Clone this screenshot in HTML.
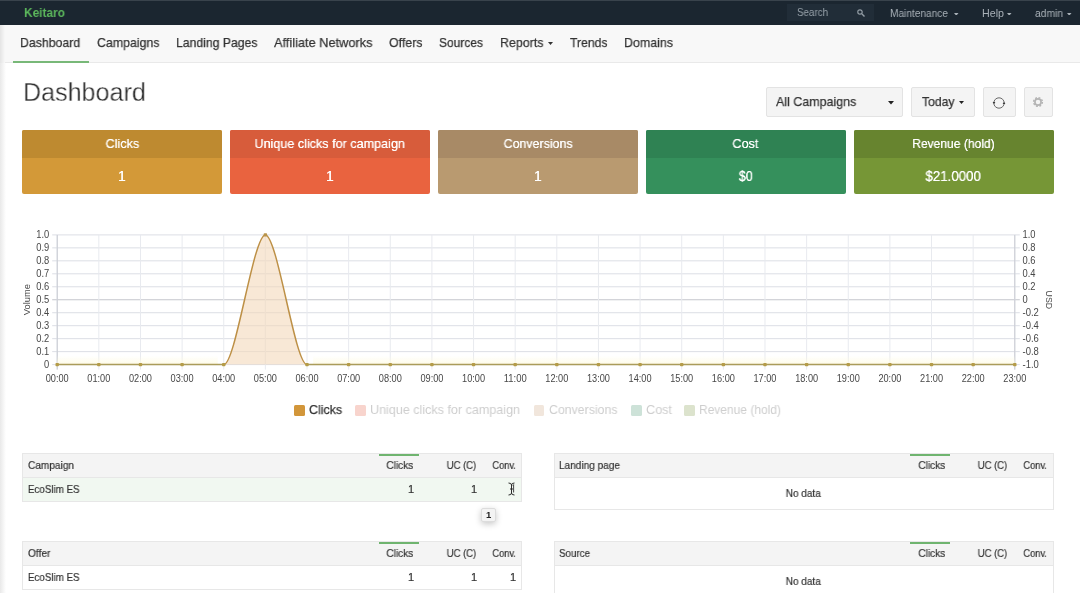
<!DOCTYPE html>
<html><head><meta charset="utf-8"><title>Keitaro</title>
<style>
*{box-sizing:border-box;margin:0;padding:0}
html,body{width:1080px;height:593px;overflow:hidden;background:#fff;font-family:"Liberation Sans",sans-serif;color:#333}
.abs{position:absolute}
.t{position:absolute;display:block;height:20px;line-height:20px;white-space:nowrap;will-change:transform}
#top{position:absolute;left:0;top:0;width:1080px;height:25px;background:#1b2630;border-top:1px solid #39434c}
#search{position:absolute;left:787px;top:4px;width:87px;height:17px;background:#212d38}
#nav{position:absolute;left:0;top:25px;width:1080px;height:38px;background:#f8f8f8;border-bottom:1px solid #e9e9e9}
#ul{position:absolute;left:13px;top:60.5px;width:76px;height:2px;background:#78b878}
.btn{position:absolute;top:87px;height:30px;background:#f4f4f4;border:1px solid #e3e3e3;border-radius:2px}
.card{position:absolute;top:130.3px;width:200px;height:63.8px;border-radius:2px;overflow:hidden}
.ct{height:27.4px}
.tbl{position:absolute;border:1px solid #e7e7e7;background:#fff;overflow:hidden}
.th{position:absolute;left:0;top:0;right:0;height:24px;background:#f4f4f4;border-bottom:1px solid #e7e7e7}
.act{position:absolute;top:-0.8px;width:40px;height:2.4px;background:#6fb46f}
.hl{position:absolute;left:0;right:0;top:24px;height:24px;background:#f1f8f1}
#tip{position:absolute;left:481.3px;top:507.5px;width:15.2px;height:14px;background:#f3f3f3;border:1px solid #dcdcdc;border-radius:2px;box-shadow:0 2px 6px rgba(0,0,0,.22)}
#edge{position:absolute;left:0;top:63px;width:6px;height:530px;background:linear-gradient(to right,#e9e9e9,#fff)}
#edge2{position:absolute;left:0;top:25px;width:5px;height:38px;background:linear-gradient(to right,#e4e4e4,#f8f8f8)}
</style></head><body>
<div id="top"></div>
<span class="t" style="left:24px;transform-origin:0 50%;top:2.5999999999999996px;font-size:13px;color:#5cb85c;transform:scaleX(0.9154);font-weight:bold;">Keitaro</span>
<div id="search"></div>
<span class="t" style="left:797px;transform-origin:0 50%;top:2.1999999999999993px;font-size:10.5px;color:#98a2aa;transform:scaleX(0.9318);">Search</span>
<svg class="abs" style="left:857px;top:9px" width="8" height="8" viewBox="0 0 8 8"><circle cx="3" cy="3" r="2.2" fill="none" stroke="#939da5" stroke-width="1.2"/><line x1="4.8" y1="4.8" x2="7.5" y2="7.5" stroke="#939da5" stroke-width="1.4"/></svg>
<span class="t" style="left:890.4px;transform-origin:0 50%;top:3.1999999999999993px;font-size:10.5px;color:#a9b1b8;transform:scaleX(0.9647);">Maintenance</span><svg class="abs" style="left:954px;top:12.5px" width="4.5" height="2.75" viewBox="0 0 4.5 2.75"><path d="M0 0 H4.5 L2.25 2.75 Z" fill="#a9b1b8"/></svg>
<span class="t" style="left:981.6px;transform-origin:0 50%;top:3.1999999999999993px;font-size:10.5px;color:#a9b1b8;transform:scaleX(1.0188);">Help</span><svg class="abs" style="left:1007.2px;top:12.5px" width="4.5" height="2.75" viewBox="0 0 4.5 2.75"><path d="M0 0 H4.5 L2.25 2.75 Z" fill="#a9b1b8"/></svg>
<span class="t" style="left:1035px;transform-origin:0 50%;top:3.1999999999999993px;font-size:10.5px;color:#a9b1b8;transform:scaleX(0.9791);">admin</span><svg class="abs" style="left:1067px;top:12.5px" width="4.5" height="2.75" viewBox="0 0 4.5 2.75"><path d="M0 0 H4.5 L2.25 2.75 Z" fill="#a9b1b8"/></svg>
<div id="nav"></div><div id="edge2"></div>
<span class="t" style="left:20.2px;transform-origin:0 50%;top:33.0px;font-size:13.5px;color:#333;transform:scaleX(0.9115);-webkit-text-stroke:0.25px #333;">Dashboard</span><span class="t" style="left:97px;transform-origin:0 50%;top:33.0px;font-size:13.5px;color:#333;transform:scaleX(0.9153);-webkit-text-stroke:0.25px #333;">Campaigns</span><span class="t" style="left:176px;transform-origin:0 50%;top:33.0px;font-size:13.5px;color:#333;transform:scaleX(0.9048);-webkit-text-stroke:0.25px #333;">Landing Pages</span><span class="t" style="left:274px;transform-origin:0 50%;top:33.0px;font-size:13.5px;color:#333;transform:scaleX(0.9468);-webkit-text-stroke:0.25px #333;">Affiliate Networks</span><span class="t" style="left:389px;transform-origin:0 50%;top:33.0px;font-size:13.5px;color:#333;transform:scaleX(0.9175);-webkit-text-stroke:0.25px #333;">Offers</span><span class="t" style="left:439px;transform-origin:0 50%;top:33.0px;font-size:13.5px;color:#333;transform:scaleX(0.8884);-webkit-text-stroke:0.25px #333;">Sources</span><span class="t" style="left:500px;transform-origin:0 50%;top:33.0px;font-size:13.5px;color:#333;transform:scaleX(0.9202);-webkit-text-stroke:0.25px #333;">Reports</span><span class="t" style="left:569.5px;transform-origin:0 50%;top:33.0px;font-size:13.5px;color:#333;transform:scaleX(0.9033);-webkit-text-stroke:0.25px #333;">Trends</span><span class="t" style="left:623.5px;transform-origin:0 50%;top:33.0px;font-size:13.5px;color:#333;transform:scaleX(0.9199);-webkit-text-stroke:0.25px #333;">Domains</span><svg class="abs" style="left:547.5px;top:42px" width="5" height="3.0" viewBox="0 0 5 3.0"><path d="M0 0 H5 L2.5 3.0 Z" fill="#333"/></svg>
<div id="ul"></div>
<div id="edge"></div>
<span class="t" style="left:22.9px;transform-origin:0 50%;top:82.4px;font-size:26.4px;color:#2f2f2f;transform:scaleX(0.9508);-webkit-text-stroke:0.3px #fff;">Dashboard</span>
<div class="btn" style="left:766px;width:137px"></div><span class="t" style="left:776px;transform-origin:0 50%;top:92.0px;font-size:13.5px;color:#333;transform:scaleX(0.9226);-webkit-text-stroke:0.25px #333;">All Campaigns</span><svg class="abs" style="left:888px;top:101px" width="6" height="3.5" viewBox="0 0 6 3.5"><path d="M0 0 H6 L3.0 3.5 Z" fill="#222"/></svg>
<div class="btn" style="left:911px;width:64px"></div><span class="t" style="left:921.5px;transform-origin:0 50%;top:92.0px;font-size:13.5px;color:#333;transform:scaleX(0.9022);-webkit-text-stroke:0.25px #333;">Today</span><svg class="abs" style="left:959px;top:101px" width="5" height="3.0" viewBox="0 0 5 3.0"><path d="M0 0 H5 L2.5 3.0 Z" fill="#222"/></svg>
<div class="btn" style="left:983px;width:33px"></div>
<svg class="abs" style="left:992px;top:96px" width="14" height="14" viewBox="0 0 14 14"><circle cx="7" cy="7" r="5.2" fill="none" stroke="#6a6a6a" stroke-width="1"/><path d="M0.6 5.9 L3.4 5.9 L2 8 Z" fill="#333"/><path d="M13.4 8.1 L10.6 8.1 L12 6 Z" fill="#333"/></svg>
<div class="btn" style="left:1024px;width:29px"></div>
<svg class="abs" style="left:1032px;top:96.3px" width="12" height="12" viewBox="0 0 12 12"><circle cx="6" cy="6" r="4.4" fill="none" stroke="#b4b4b4" stroke-width="1.4" stroke-dasharray="1.9 1.55"/><circle cx="6" cy="6" r="3.1" fill="none" stroke="#b4b4b4" stroke-width="1.7"/></svg>
<div class="card" style="left:22px;background:#d39938"><div class="ct" style="background:#be8a30"></div></div><span class="t" style="left:104.67px;transform-origin:50% 50%;top:134.4px;font-size:13px;color:#fff;transform:scaleX(0.9664);text-shadow:0 0 0.4px #fff;">Clicks</span><span class="t" style="left:118.11px;transform-origin:50% 50%;top:166.2px;font-size:14px;color:#fff;transform:scaleX(1.0000);text-shadow:0 0 0.4px #fff;">1</span><div class="card" style="left:229.9px;background:#e9633f"><div class="ct" style="background:#d75c3b"></div></div><span class="t" style="left:252.23px;transform-origin:50% 50%;top:134.4px;font-size:13px;color:#fff;transform:scaleX(0.9688);text-shadow:0 0 0.4px #fff;">Unique clicks for campaign</span><span class="t" style="left:326.01px;transform-origin:50% 50%;top:166.2px;font-size:14px;color:#fff;transform:scaleX(1.0000);text-shadow:0 0 0.4px #fff;">1</span><div class="card" style="left:437.8px;background:#b99a70"><div class="ct" style="background:#a88a66"></div></div><span class="t" style="left:501.67px;transform-origin:50% 50%;top:134.4px;font-size:13px;color:#fff;transform:scaleX(0.9549);text-shadow:0 0 0.4px #fff;">Conversions</span><span class="t" style="left:533.91px;transform-origin:50% 50%;top:166.2px;font-size:14px;color:#fff;transform:scaleX(1.0000);text-shadow:0 0 0.4px #fff;">1</span><div class="card" style="left:645.6px;background:#35905c"><div class="ct" style="background:#2f8253"></div></div><span class="t" style="left:732.23px;transform-origin:50% 50%;top:134.4px;font-size:13px;color:#fff;transform:scaleX(0.9727);text-shadow:0 0 0.4px #fff;">Cost</span><span class="t" style="left:737.81px;transform-origin:50% 50%;top:166.2px;font-size:14px;color:#fff;transform:scaleX(0.8990);text-shadow:0 0 0.4px #fff;">$0</span><div class="card" style="left:853.5px;background:#769636"><div class="ct" style="background:#67842f"></div></div><span class="t" style="left:909.06px;transform-origin:50% 50%;top:134.4px;font-size:13px;color:#fff;transform:scaleX(0.9281);text-shadow:0 0 0.4px #fff;">Revenue (hold)</span><span class="t" style="left:924.30px;transform-origin:50% 50%;top:166.2px;font-size:14px;color:#fff;transform:scaleX(0.9505);text-shadow:0 0 0.4px #fff;">$21.0000</span>
<svg class="abs" style="left:0;top:0;will-change:transform" width="1080" height="593" viewBox="0 0 1080 593">
<defs><linearGradient id="glow" x1="0" y1="0" x2="0" y2="1"><stop offset="0" stop-color="#fffbe0" stop-opacity="0"/><stop offset="1" stop-color="#fffbe0" stop-opacity="0.75"/></linearGradient></defs><g><line x1="52.2" y1="234.90" x2="1019.8" y2="234.90" stroke="#dcdee5" stroke-width="1"/><line x1="52.2" y1="247.87" x2="1019.8" y2="247.87" stroke="#dcdee5" stroke-width="1"/><line x1="52.2" y1="260.84" x2="1019.8" y2="260.84" stroke="#dcdee5" stroke-width="1"/><line x1="52.2" y1="273.81" x2="1019.8" y2="273.81" stroke="#dcdee5" stroke-width="1"/><line x1="52.2" y1="286.78" x2="1019.8" y2="286.78" stroke="#dcdee5" stroke-width="1"/><line x1="52.2" y1="299.75" x2="1019.8" y2="299.75" stroke="#c4c6cc" stroke-width="1"/><line x1="52.2" y1="312.72" x2="1019.8" y2="312.72" stroke="#dcdee5" stroke-width="1"/><line x1="52.2" y1="325.69" x2="1019.8" y2="325.69" stroke="#dcdee5" stroke-width="1"/><line x1="52.2" y1="338.66" x2="1019.8" y2="338.66" stroke="#dcdee5" stroke-width="1"/><line x1="52.2" y1="351.63" x2="1019.8" y2="351.63" stroke="#dcdee5" stroke-width="1"/><line x1="52.2" y1="364.60" x2="1019.8" y2="364.60" stroke="#dcdee5" stroke-width="1"/><line x1="57.20" y1="234.9" x2="57.20" y2="369.6" stroke="#e8eaef" stroke-width="1"/><line x1="98.83" y1="234.9" x2="98.83" y2="369.6" stroke="#e8eaef" stroke-width="1"/><line x1="140.47" y1="234.9" x2="140.47" y2="369.6" stroke="#e8eaef" stroke-width="1"/><line x1="182.10" y1="234.9" x2="182.10" y2="369.6" stroke="#e8eaef" stroke-width="1"/><line x1="223.74" y1="234.9" x2="223.74" y2="369.6" stroke="#e8eaef" stroke-width="1"/><line x1="265.37" y1="234.9" x2="265.37" y2="369.6" stroke="#e8eaef" stroke-width="1"/><line x1="307.01" y1="234.9" x2="307.01" y2="369.6" stroke="#e8eaef" stroke-width="1"/><line x1="348.64" y1="234.9" x2="348.64" y2="369.6" stroke="#e8eaef" stroke-width="1"/><line x1="390.28" y1="234.9" x2="390.28" y2="369.6" stroke="#e8eaef" stroke-width="1"/><line x1="431.91" y1="234.9" x2="431.91" y2="369.6" stroke="#e8eaef" stroke-width="1"/><line x1="473.55" y1="234.9" x2="473.55" y2="369.6" stroke="#e8eaef" stroke-width="1"/><line x1="515.18" y1="234.9" x2="515.18" y2="369.6" stroke="#e8eaef" stroke-width="1"/><line x1="556.82" y1="234.9" x2="556.82" y2="369.6" stroke="#e8eaef" stroke-width="1"/><line x1="598.45" y1="234.9" x2="598.45" y2="369.6" stroke="#e8eaef" stroke-width="1"/><line x1="640.09" y1="234.9" x2="640.09" y2="369.6" stroke="#e8eaef" stroke-width="1"/><line x1="681.72" y1="234.9" x2="681.72" y2="369.6" stroke="#e8eaef" stroke-width="1"/><line x1="723.36" y1="234.9" x2="723.36" y2="369.6" stroke="#e8eaef" stroke-width="1"/><line x1="764.99" y1="234.9" x2="764.99" y2="369.6" stroke="#e8eaef" stroke-width="1"/><line x1="806.63" y1="234.9" x2="806.63" y2="369.6" stroke="#e8eaef" stroke-width="1"/><line x1="848.26" y1="234.9" x2="848.26" y2="369.6" stroke="#e8eaef" stroke-width="1"/><line x1="889.90" y1="234.9" x2="889.90" y2="369.6" stroke="#e8eaef" stroke-width="1"/><line x1="931.53" y1="234.9" x2="931.53" y2="369.6" stroke="#e8eaef" stroke-width="1"/><line x1="973.17" y1="234.9" x2="973.17" y2="369.6" stroke="#e8eaef" stroke-width="1"/><line x1="1014.80" y1="234.9" x2="1014.80" y2="369.6" stroke="#e8eaef" stroke-width="1"/></g>
<line x1="57.2" y1="234.9" x2="57.2" y2="369.6" stroke="#c6c8d0"/>
<line x1="1014.8" y1="234.9" x2="1014.8" y2="369.6" stroke="#c6c8d0"/>
<path d="M223.74,364.6 C235.81,364.6 253.30,234.9 265.37,234.9 C277.45,234.9 294.93,364.6 307.01,364.6 Z" fill="#f3d9bb" fill-opacity="0.6"/>
<rect x="57.2" y="355.6" width="160.54" height="9" fill="url(#glow)"/><rect x="313.01" y="355.6" width="701.79" height="9" fill="url(#glow)"/>
<path d="M57.2,364.6 L223.74,364.6 M307.01,364.6 L1014.8,364.6" fill="none" stroke="#aa9c5a" stroke-width="1.5"/>
<path d="M223.74,364.6 C235.81,364.6 253.30,234.9 265.37,234.9 C277.45,234.9 294.93,364.6 307.01,364.6" fill="none" stroke="#bd9046" stroke-width="1.5"/>
<rect x="55.50" y="362.90" width="3.4" height="3.4" rx="0.8" fill="#b59c48"/><rect x="97.13" y="362.90" width="3.4" height="3.4" rx="0.8" fill="#b59c48"/><rect x="138.77" y="362.90" width="3.4" height="3.4" rx="0.8" fill="#b59c48"/><rect x="180.40" y="362.90" width="3.4" height="3.4" rx="0.8" fill="#b59c48"/><rect x="222.04" y="362.90" width="3.4" height="3.4" rx="0.8" fill="#b59c48"/><rect x="263.67" y="233.20" width="3.4" height="3.4" rx="0.8" fill="#b8934a"/><rect x="305.31" y="362.90" width="3.4" height="3.4" rx="0.8" fill="#b59c48"/><rect x="346.94" y="362.90" width="3.4" height="3.4" rx="0.8" fill="#b59c48"/><rect x="388.58" y="362.90" width="3.4" height="3.4" rx="0.8" fill="#b59c48"/><rect x="430.21" y="362.90" width="3.4" height="3.4" rx="0.8" fill="#b59c48"/><rect x="471.85" y="362.90" width="3.4" height="3.4" rx="0.8" fill="#b59c48"/><rect x="513.48" y="362.90" width="3.4" height="3.4" rx="0.8" fill="#b59c48"/><rect x="555.12" y="362.90" width="3.4" height="3.4" rx="0.8" fill="#b59c48"/><rect x="596.75" y="362.90" width="3.4" height="3.4" rx="0.8" fill="#b59c48"/><rect x="638.39" y="362.90" width="3.4" height="3.4" rx="0.8" fill="#b59c48"/><rect x="680.02" y="362.90" width="3.4" height="3.4" rx="0.8" fill="#b59c48"/><rect x="721.66" y="362.90" width="3.4" height="3.4" rx="0.8" fill="#b59c48"/><rect x="763.29" y="362.90" width="3.4" height="3.4" rx="0.8" fill="#b59c48"/><rect x="804.93" y="362.90" width="3.4" height="3.4" rx="0.8" fill="#b59c48"/><rect x="846.56" y="362.90" width="3.4" height="3.4" rx="0.8" fill="#b59c48"/><rect x="888.20" y="362.90" width="3.4" height="3.4" rx="0.8" fill="#b59c48"/><rect x="929.83" y="362.90" width="3.4" height="3.4" rx="0.8" fill="#b59c48"/><rect x="971.47" y="362.90" width="3.4" height="3.4" rx="0.8" fill="#b59c48"/><rect x="1013.10" y="362.90" width="3.4" height="3.4" rx="0.8" fill="#b59c48"/>
<g font-family="Liberation Sans, sans-serif" font-size="10.6" fill="#484848"><text x="49.3" y="238.45" text-anchor="end" textLength="13" lengthAdjust="spacingAndGlyphs">1.0</text><text x="49.3" y="251.42" text-anchor="end" textLength="13" lengthAdjust="spacingAndGlyphs">0.9</text><text x="49.3" y="264.39" text-anchor="end" textLength="13" lengthAdjust="spacingAndGlyphs">0.8</text><text x="49.3" y="277.36" text-anchor="end" textLength="13" lengthAdjust="spacingAndGlyphs">0.7</text><text x="49.3" y="290.33" text-anchor="end" textLength="13" lengthAdjust="spacingAndGlyphs">0.6</text><text x="49.3" y="303.30" text-anchor="end" textLength="13" lengthAdjust="spacingAndGlyphs">0.5</text><text x="49.3" y="316.27" text-anchor="end" textLength="13" lengthAdjust="spacingAndGlyphs">0.4</text><text x="49.3" y="329.24" text-anchor="end" textLength="13" lengthAdjust="spacingAndGlyphs">0.3</text><text x="49.3" y="342.21" text-anchor="end" textLength="13" lengthAdjust="spacingAndGlyphs">0.2</text><text x="49.3" y="355.18" text-anchor="end" textLength="13" lengthAdjust="spacingAndGlyphs">0.1</text><text x="49.3" y="368.15" text-anchor="end" textLength="5.2" lengthAdjust="spacingAndGlyphs">0</text><text x="1022.5" y="238.45" text-anchor="start" textLength="13" lengthAdjust="spacingAndGlyphs">1.0</text><text x="1022.5" y="251.42" text-anchor="start" textLength="13" lengthAdjust="spacingAndGlyphs">0.8</text><text x="1022.5" y="264.39" text-anchor="start" textLength="13" lengthAdjust="spacingAndGlyphs">0.6</text><text x="1022.5" y="277.36" text-anchor="start" textLength="13" lengthAdjust="spacingAndGlyphs">0.4</text><text x="1022.5" y="290.33" text-anchor="start" textLength="13" lengthAdjust="spacingAndGlyphs">0.2</text><text x="1022.5" y="303.30" text-anchor="start" textLength="5.2" lengthAdjust="spacingAndGlyphs">0</text><text x="1022.5" y="316.27" text-anchor="start" textLength="16.3" lengthAdjust="spacingAndGlyphs">-0.2</text><text x="1022.5" y="329.24" text-anchor="start" textLength="16.3" lengthAdjust="spacingAndGlyphs">-0.4</text><text x="1022.5" y="342.21" text-anchor="start" textLength="16.3" lengthAdjust="spacingAndGlyphs">-0.6</text><text x="1022.5" y="355.18" text-anchor="start" textLength="16.3" lengthAdjust="spacingAndGlyphs">-0.8</text><text x="1022.5" y="368.15" text-anchor="start" textLength="16.3" lengthAdjust="spacingAndGlyphs">-1.0</text><text x="57.20" y="381.7" text-anchor="middle" textLength="23" lengthAdjust="spacingAndGlyphs">00:00</text><text x="98.83" y="381.7" text-anchor="middle" textLength="23" lengthAdjust="spacingAndGlyphs">01:00</text><text x="140.47" y="381.7" text-anchor="middle" textLength="23" lengthAdjust="spacingAndGlyphs">02:00</text><text x="182.10" y="381.7" text-anchor="middle" textLength="23" lengthAdjust="spacingAndGlyphs">03:00</text><text x="223.74" y="381.7" text-anchor="middle" textLength="23" lengthAdjust="spacingAndGlyphs">04:00</text><text x="265.37" y="381.7" text-anchor="middle" textLength="23" lengthAdjust="spacingAndGlyphs">05:00</text><text x="307.01" y="381.7" text-anchor="middle" textLength="23" lengthAdjust="spacingAndGlyphs">06:00</text><text x="348.64" y="381.7" text-anchor="middle" textLength="23" lengthAdjust="spacingAndGlyphs">07:00</text><text x="390.28" y="381.7" text-anchor="middle" textLength="23" lengthAdjust="spacingAndGlyphs">08:00</text><text x="431.91" y="381.7" text-anchor="middle" textLength="23" lengthAdjust="spacingAndGlyphs">09:00</text><text x="473.55" y="381.7" text-anchor="middle" textLength="23" lengthAdjust="spacingAndGlyphs">10:00</text><text x="515.18" y="381.7" text-anchor="middle" textLength="23" lengthAdjust="spacingAndGlyphs">11:00</text><text x="556.82" y="381.7" text-anchor="middle" textLength="23" lengthAdjust="spacingAndGlyphs">12:00</text><text x="598.45" y="381.7" text-anchor="middle" textLength="23" lengthAdjust="spacingAndGlyphs">13:00</text><text x="640.09" y="381.7" text-anchor="middle" textLength="23" lengthAdjust="spacingAndGlyphs">14:00</text><text x="681.72" y="381.7" text-anchor="middle" textLength="23" lengthAdjust="spacingAndGlyphs">15:00</text><text x="723.36" y="381.7" text-anchor="middle" textLength="23" lengthAdjust="spacingAndGlyphs">16:00</text><text x="764.99" y="381.7" text-anchor="middle" textLength="23" lengthAdjust="spacingAndGlyphs">17:00</text><text x="806.63" y="381.7" text-anchor="middle" textLength="23" lengthAdjust="spacingAndGlyphs">18:00</text><text x="848.26" y="381.7" text-anchor="middle" textLength="23" lengthAdjust="spacingAndGlyphs">19:00</text><text x="889.90" y="381.7" text-anchor="middle" textLength="23" lengthAdjust="spacingAndGlyphs">20:00</text><text x="931.53" y="381.7" text-anchor="middle" textLength="23" lengthAdjust="spacingAndGlyphs">21:00</text><text x="973.17" y="381.7" text-anchor="middle" textLength="23" lengthAdjust="spacingAndGlyphs">22:00</text><text x="1014.80" y="381.7" text-anchor="middle" textLength="23" lengthAdjust="spacingAndGlyphs">23:00</text>
<text transform="translate(30,299.7) rotate(-90)" text-anchor="middle" font-size="9.5" textLength="31" lengthAdjust="spacingAndGlyphs">Volume</text>
<text transform="translate(1045.5,299.8) rotate(90)" text-anchor="middle" font-size="9.5" textLength="18.5" lengthAdjust="spacingAndGlyphs">USD</text>
</g>
</svg>
<div class="abs" style="left:294.3px;top:405px;width:10.5px;height:10.5px;border-radius:1.5px;background:#d2963a"></div><span class="t" style="left:309.2px;transform-origin:0 50%;top:400.0px;font-size:13px;color:#333;transform:scaleX(0.9520);-webkit-text-stroke:0.25px #333;">Clicks</span><div class="abs" style="left:355px;top:405px;width:10.5px;height:10.5px;border-radius:1.5px;background:#f8d4cd"></div><span class="t" style="left:370px;transform-origin:0 50%;top:400.0px;font-size:13px;color:#cecece;transform:scaleX(0.9656);">Unique clicks for campaign</span><div class="abs" style="left:533.5px;top:405px;width:10.5px;height:10.5px;border-radius:1.5px;background:#f1e6dc"></div><span class="t" style="left:548.5px;transform-origin:0 50%;top:400.0px;font-size:13px;color:#cecece;transform:scaleX(0.9480);">Conversions</span><div class="abs" style="left:631px;top:405px;width:10.5px;height:10.5px;border-radius:1.5px;background:#cde2d8"></div><span class="t" style="left:645.5px;transform-origin:0 50%;top:400.0px;font-size:13px;color:#cecece;transform:scaleX(0.9727);">Cost</span><div class="abs" style="left:684px;top:405px;width:10.5px;height:10.5px;border-radius:1.5px;background:#dce3cd"></div><span class="t" style="left:699px;transform-origin:0 50%;top:400.0px;font-size:13px;color:#cecece;transform:scaleX(0.9225);">Revenue (hold)</span>
<div class="tbl" style="left:22px;top:453px;width:500px;height:49px"><div class="th"></div><div class="act" style="left:355.5px"></div><div class="hl"></div></div><span class="t" style="left:27.5px;transform-origin:0 50%;top:454.8px;font-size:11px;color:#333;transform:scaleX(0.9174);-webkit-text-stroke:0.2px #333;">Campaign</span><span class="t" style="left:384.17px;transform-origin:100% 50%;top:454.8px;font-size:11px;color:#333;transform:scaleX(0.9205);-webkit-text-stroke:0.2px #333;">Clicks</span><span class="t" style="left:441.79px;transform-origin:100% 50%;top:454.8px;font-size:11px;color:#333;transform:scaleX(0.8622);-webkit-text-stroke:0.2px #333;">UC (C)</span><span class="t" style="left:487.58px;transform-origin:100% 50%;top:454.8px;font-size:11px;color:#333;transform:scaleX(0.8417);-webkit-text-stroke:0.2px #333;">Conv.</span><span class="t" style="left:27.5px;transform-origin:0 50%;top:479.0px;font-size:11px;color:#333;transform:scaleX(0.8868);-webkit-text-stroke:0.2px #333;">EcoSlim ES</span><span class="t" style="left:407.88px;transform-origin:100% 50%;top:479.0px;font-size:11px;color:#333;transform:scaleX(1.0000);-webkit-text-stroke:0.2px #333;">1</span><span class="t" style="left:471.38px;transform-origin:100% 50%;top:479.0px;font-size:11px;color:#333;transform:scaleX(1.0000);-webkit-text-stroke:0.2px #333;">1</span>
<div class="tbl" style="left:22px;top:541px;width:500px;height:49px"><div class="th"></div><div class="act" style="left:355.5px"></div></div><span class="t" style="left:27.5px;transform-origin:0 50%;top:542.8px;font-size:11px;color:#333;transform:scaleX(0.9278);-webkit-text-stroke:0.2px #333;">Offer</span><span class="t" style="left:384.17px;transform-origin:100% 50%;top:542.8px;font-size:11px;color:#333;transform:scaleX(0.9205);-webkit-text-stroke:0.2px #333;">Clicks</span><span class="t" style="left:441.79px;transform-origin:100% 50%;top:542.8px;font-size:11px;color:#333;transform:scaleX(0.8622);-webkit-text-stroke:0.2px #333;">UC (C)</span><span class="t" style="left:487.58px;transform-origin:100% 50%;top:542.8px;font-size:11px;color:#333;transform:scaleX(0.8417);-webkit-text-stroke:0.2px #333;">Conv.</span><span class="t" style="left:27.5px;transform-origin:0 50%;top:567.0px;font-size:11px;color:#333;transform:scaleX(0.8868);-webkit-text-stroke:0.2px #333;">EcoSlim ES</span><span class="t" style="left:407.88px;transform-origin:100% 50%;top:567.0px;font-size:11px;color:#333;transform:scaleX(1.0000);-webkit-text-stroke:0.2px #333;">1</span><span class="t" style="left:471.38px;transform-origin:100% 50%;top:567.0px;font-size:11px;color:#333;transform:scaleX(1.0000);-webkit-text-stroke:0.2px #333;">1</span><span class="t" style="left:509.88px;transform-origin:100% 50%;top:567.0px;font-size:11px;color:#333;transform:scaleX(1.0000);-webkit-text-stroke:0.2px #333;">1</span>
<div class="tbl" style="left:553.5px;top:453px;width:500px;height:57px"><div class="th"></div><div class="act" style="left:355.5px"></div></div><span class="t" style="left:559.0px;transform-origin:0 50%;top:454.8px;font-size:11px;color:#333;transform:scaleX(0.9149);-webkit-text-stroke:0.2px #333;">Landing page</span><span class="t" style="left:915.67px;transform-origin:100% 50%;top:454.8px;font-size:11px;color:#333;transform:scaleX(0.9205);-webkit-text-stroke:0.2px #333;">Clicks</span><span class="t" style="left:973.29px;transform-origin:100% 50%;top:454.8px;font-size:11px;color:#333;transform:scaleX(0.8622);-webkit-text-stroke:0.2px #333;">UC (C)</span><span class="t" style="left:1019.08px;transform-origin:100% 50%;top:454.8px;font-size:11px;color:#333;transform:scaleX(0.8417);-webkit-text-stroke:0.2px #333;">Conv.</span><span class="t" style="left:784.24px;transform-origin:50% 50%;top:483.3px;font-size:11px;color:#333;transform:scaleX(0.9085);-webkit-text-stroke:0.2px #333;">No data</span>
<div class="tbl" style="left:553.5px;top:541px;width:500px;height:57px"><div class="th"></div><div class="act" style="left:355.5px"></div></div><span class="t" style="left:559.0px;transform-origin:0 50%;top:542.8px;font-size:11px;color:#333;transform:scaleX(0.8894);-webkit-text-stroke:0.2px #333;">Source</span><span class="t" style="left:915.67px;transform-origin:100% 50%;top:542.8px;font-size:11px;color:#333;transform:scaleX(0.9205);-webkit-text-stroke:0.2px #333;">Clicks</span><span class="t" style="left:973.29px;transform-origin:100% 50%;top:542.8px;font-size:11px;color:#333;transform:scaleX(0.8622);-webkit-text-stroke:0.2px #333;">UC (C)</span><span class="t" style="left:1019.08px;transform-origin:100% 50%;top:542.8px;font-size:11px;color:#333;transform:scaleX(0.8417);-webkit-text-stroke:0.2px #333;">Conv.</span><span class="t" style="left:784.24px;transform-origin:50% 50%;top:571.3px;font-size:11px;color:#333;transform:scaleX(0.9085);-webkit-text-stroke:0.2px #333;">No data</span>
<svg class="abs" style="left:507px;top:482px" width="9" height="14" viewBox="0 0 9 14"><path d="M1.5 1 Q4.5 1 4.5 3 Q4.5 1 7.5 1 M4.5 3 V11 M1.5 13 Q4.5 13 4.5 11 Q4.5 13 7.5 13 M3 7 H6" fill="none" stroke="#222" stroke-width="0.95"/><path d="M5.8 3.5 L6.6 2.6 V10.5" fill="none" stroke="#333" stroke-width="0.9"/></svg>
<div id="tip"></div><span class="t" style="left:486.16px;transform-origin:50% 50%;top:504.5px;font-size:9.5px;color:#222;transform:scaleX(1.0000);font-weight:bold;">1</span>
</body></html>
